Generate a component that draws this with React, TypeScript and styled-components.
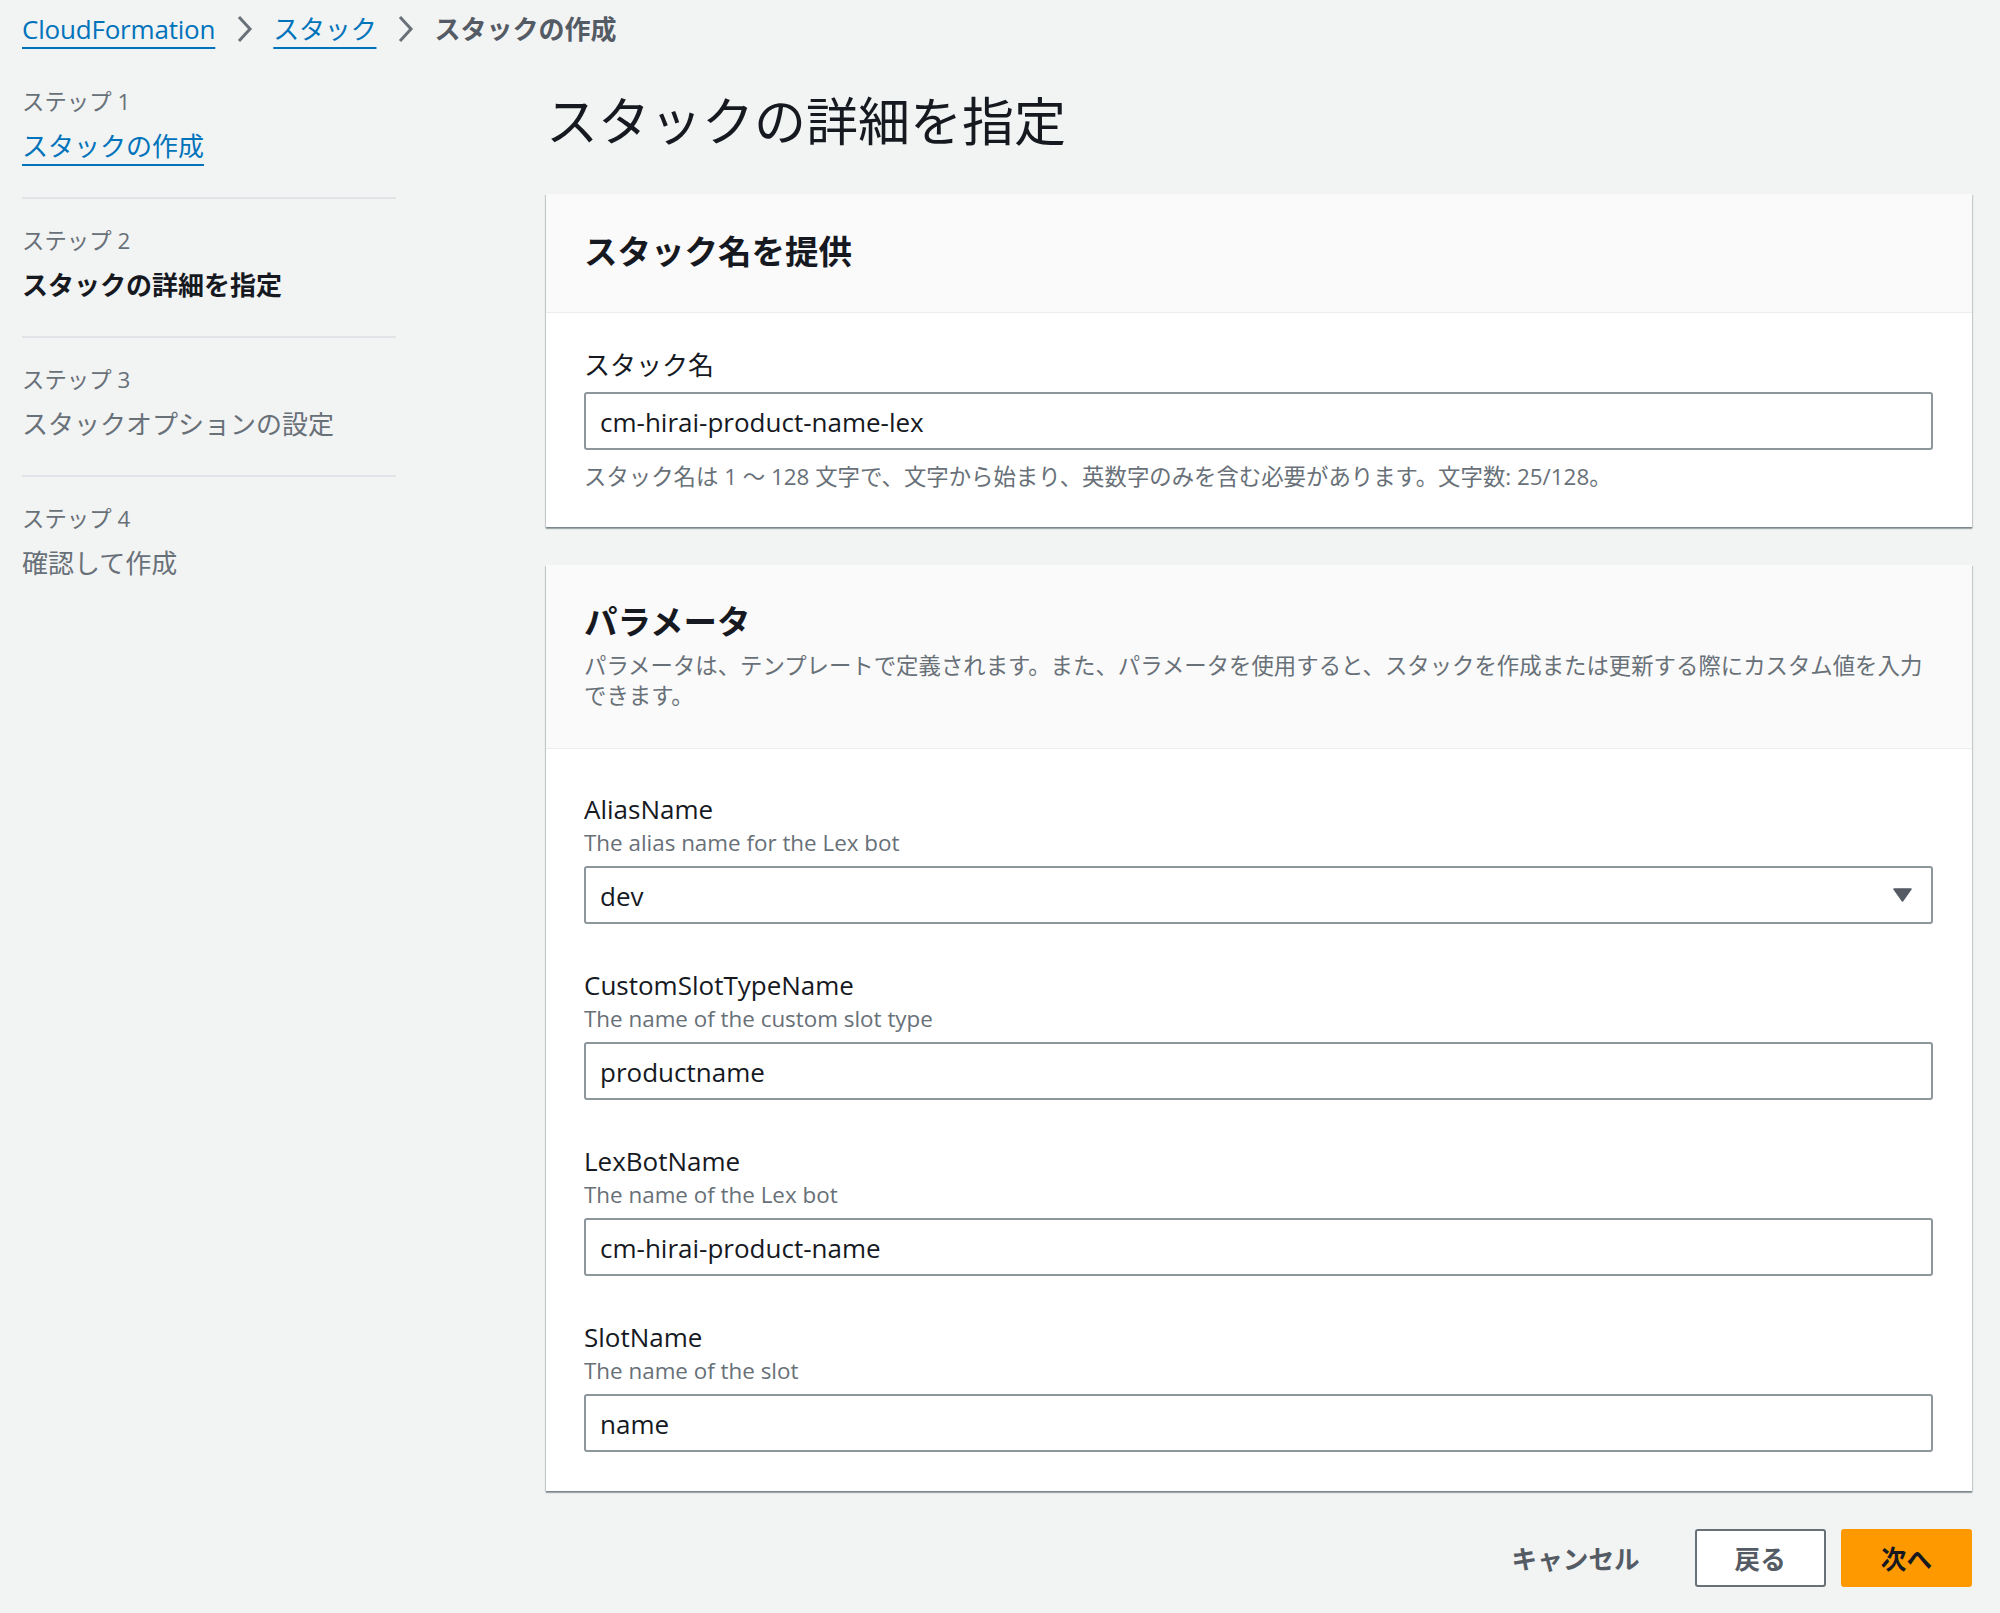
import styled, { createGlobalStyle } from 'styled-components';

const GlobalStyle = createGlobalStyle`
  body {
    margin: 0;
    background: #f2f3f3;
    font-family: "Open Sans", "Noto Sans CJK JP", sans-serif;
    color: #16191f;
  }
`;

const Page = styled.div`
  padding: 10px 28px 40px 22px;
`;

const Breadcrumbs = styled.nav`
  display: flex;
  align-items: center;
  gap: 20px;
  height: 38px;
  font-size: 26px;
  line-height: 38px;
`;

const CrumbLink = styled.a`
  color: #0073bb;
  letter-spacing: -0.2px;
  text-decoration: underline;
  text-decoration-thickness: 2px;
  text-underline-offset: 8px;
`;

const CrumbCurrent = styled.span`
  color: #545b64;
  font-weight: 700;
`;

const Layout = styled.div`
  display: grid;
  grid-template-columns: 374px 1fr;
  column-gap: 150px;
  margin-top: 12px;
`;

const Steps = styled.ol`
  list-style: none;
  margin: 0;
  padding: 0;
`;

const Step = styled.li`
  padding: 27px 0 33px;
  border-bottom: 2px solid #e1e4e6;

  &:last-child {
    border-bottom: none;
  }
`;

const StepLabel = styled.div`
  font-size: 22.4px;
  line-height: 30px;
  color: #687078;
`;

const StepTitle = styled.div<{ $state: 'done' | 'active' | 'todo' }>`
  margin-top: 11px;
  font-size: 26px;
  line-height: 36px;
  font-weight: ${(p) => (p.$state === 'active' ? 700 : 400)};
  color: ${(p) => (p.$state === 'active' ? '#16191f' : p.$state === 'done' ? '#0073bb' : '#687078')};

  a {
    color: inherit;
    text-decoration: underline;
    text-decoration-thickness: 2px;
    text-underline-offset: 8px;
  }
`;

const Main = styled.main`
  display: flex;
  flex-direction: column;
`;

const Title = styled.h1`
  margin: 29px 0 41px;
  font-size: 52px;
  line-height: 64px;
  font-weight: 400;
  color: #16191f;
`;

const Cards = styled.div`
  display: flex;
  flex-direction: column;
  gap: 38px;
`;

const Card = styled.section`
  background: #fff;
  box-shadow: 0 2px 1px 0 rgba(0, 28, 36, 0.3), 1px 1px 1px 0 rgba(0, 28, 36, 0.15),
    -1px 1px 1px 0 rgba(0, 28, 36, 0.15);
`;

const CardHeader = styled.header<{ $pt: number; $pb: number }>`
  background: #fafafa;
  border-bottom: 1px solid #eaeded;
  padding: ${(p) => p.$pt}px 38px ${(p) => p.$pb}px;
`;

const CardTitle = styled.h2`
  margin: 0;
  font-size: 33.5px;
  line-height: 44px;
  font-weight: 700;
  color: #16191f;
`;

const CardDescription = styled.p`
  margin: 8px 0 0;
  font-size: 22.4px;
  line-height: 30px;
  color: #687078;
`;

const CardBody = styled.div<{ $pt: number; $pb: number }>`
  padding: ${(p) => p.$pt}px 39px ${(p) => p.$pb}px 38px;
  display: flex;
  flex-direction: column;
  gap: 44px;
`;

const Field = styled.div`
  display: flex;
  flex-direction: column;
`;

const Label = styled.label`
  font-size: 26px;
  line-height: 34px;
  color: #16191f;
`;

const FieldDescription = styled.div`
  margin-top: 2px;
  font-size: 22.4px;
  line-height: 30px;
  color: #687078;
`;

const Control = styled.div<{ $gap?: number }>`
  position: relative;
  margin-top: ${(p) => p.$gap ?? 8}px;
  height: 58px;
  box-sizing: border-box;
  border: 2px solid #8d969a;
  border-radius: 3px;
  background: #fff;
  display: flex;
  align-items: center;
  padding: 2px 14px 0;
  font-size: 26px;
  color: #16191f;
`;

const Constraint = styled.div`
  margin-top: 12px;
  font-size: 22.4px;
  line-height: 30px;
  color: #687078;
`;

const Caret = styled.svg`
  position: absolute;
  right: 19px;
  top: 50%;
  transform: translateY(-50%);
`;

const Actions = styled.div`
  display: flex;
  justify-content: flex-end;
  gap: 15px;
  margin-top: 38px;
`;

const Button = styled.button<{ $variant: 'link' | 'normal' | 'primary' }>`
  height: 58px;
  padding: 0 38px;
  border-radius: 3px;
  font-family: inherit;
  font-size: 25.6px;
  font-weight: 700;
  border: 2px solid
    ${(p) => (p.$variant === 'normal' ? '#687078' : p.$variant === 'primary' ? '#ff9900' : 'transparent')};
  background: ${(p) => (p.$variant === 'primary' ? '#ff9900' : p.$variant === 'normal' ? '#fff' : 'transparent')};
  color: ${(p) => (p.$variant === 'primary' ? '#16191f' : '#545b64')};
`;

const Chevron = () => (
  <svg width="18" height="28" viewBox="0 0 18 28">
    <polyline points="4,2 15,14 4,26" fill="none" stroke="#687078" strokeWidth="3" />
  </svg>
);

const params = [
  { name: 'AliasName', desc: 'The alias name for the Lex bot', value: 'dev', select: true },
  { name: 'CustomSlotTypeName', desc: 'The name of the custom slot type', value: 'productname' },
  { name: 'LexBotName', desc: 'The name of the Lex bot', value: 'cm-hirai-product-name' },
  { name: 'SlotName', desc: 'The name of the slot', value: 'name' },
];

const steps = [
  { label: 'ステップ 1', title: 'スタックの作成', state: 'done' as const },
  { label: 'ステップ 2', title: 'スタックの詳細を指定', state: 'active' as const },
  { label: 'ステップ 3', title: 'スタックオプションの設定', state: 'todo' as const },
  { label: 'ステップ 4', title: '確認して作成', state: 'todo' as const },
];

const App = () => (
  <>
    <GlobalStyle />
    <Page>
      <Breadcrumbs>
        <CrumbLink>CloudFormation</CrumbLink>
        <Chevron />
        <CrumbLink>スタック</CrumbLink>
        <Chevron />
        <CrumbCurrent>スタックの作成</CrumbCurrent>
      </Breadcrumbs>
      <Layout>
        <Steps>
          {steps.map((s) => (
            <Step key={s.label}>
              <StepLabel>{s.label}</StepLabel>
              <StepTitle $state={s.state}>
                {s.state === 'done' ? <a>{s.title}</a> : s.title}
              </StepTitle>
            </Step>
          ))}
        </Steps>
        <Main>
          <Title>スタックの詳細を指定</Title>
          <Cards>
            <Card>
              <CardHeader $pt={35} $pb={39}>
                <CardTitle>スタック名を提供</CardTitle>
              </CardHeader>
              <CardBody $pt={35} $pb={35}>
                <Field>
                  <Label>スタック名</Label>
                  <Control $gap={10}>cm-hirai-product-name-lex</Control>
                  <Constraint>
                    スタック名は 1 ～ 128 文字で、文字から始まり、英数字のみを含む必要があります。文字数: 25/128。
                  </Constraint>
                </Field>
              </CardBody>
            </Card>
            <Card>
              <CardHeader $pt={34} $pb={37}>
                <CardTitle>パラメータ</CardTitle>
                <CardDescription>
                  パラメータは、テンプレートで定義されます。また、パラメータを使用すると、スタックを作成または更新する際にカスタム値を入力できます。
                </CardDescription>
              </CardHeader>
              <CardBody $pt={43} $pb={39}>
                {params.map((p) => (
                  <Field key={p.name}>
                    <Label>{p.name}</Label>
                    <FieldDescription>{p.desc}</FieldDescription>
                    <Control>
                      {p.value}
                      {p.select && (
                        <Caret width="19" height="14" viewBox="0 0 19 14">
                          <path d="M1 1 H18 L9.5 13 Z" fill="#545b64" stroke="#545b64" strokeWidth="1.5" strokeLinejoin="round" />
                        </Caret>
                      )}
                    </Control>
                  </Field>
                ))}
              </CardBody>
            </Card>
          </Cards>
          <Actions>
            <Button $variant="link">キャンセル</Button>
            <Button $variant="normal">戻る</Button>
            <Button $variant="primary">次へ</Button>
          </Actions>
        </Main>
      </Layout>
    </Page>
  </>
);

export default App;
